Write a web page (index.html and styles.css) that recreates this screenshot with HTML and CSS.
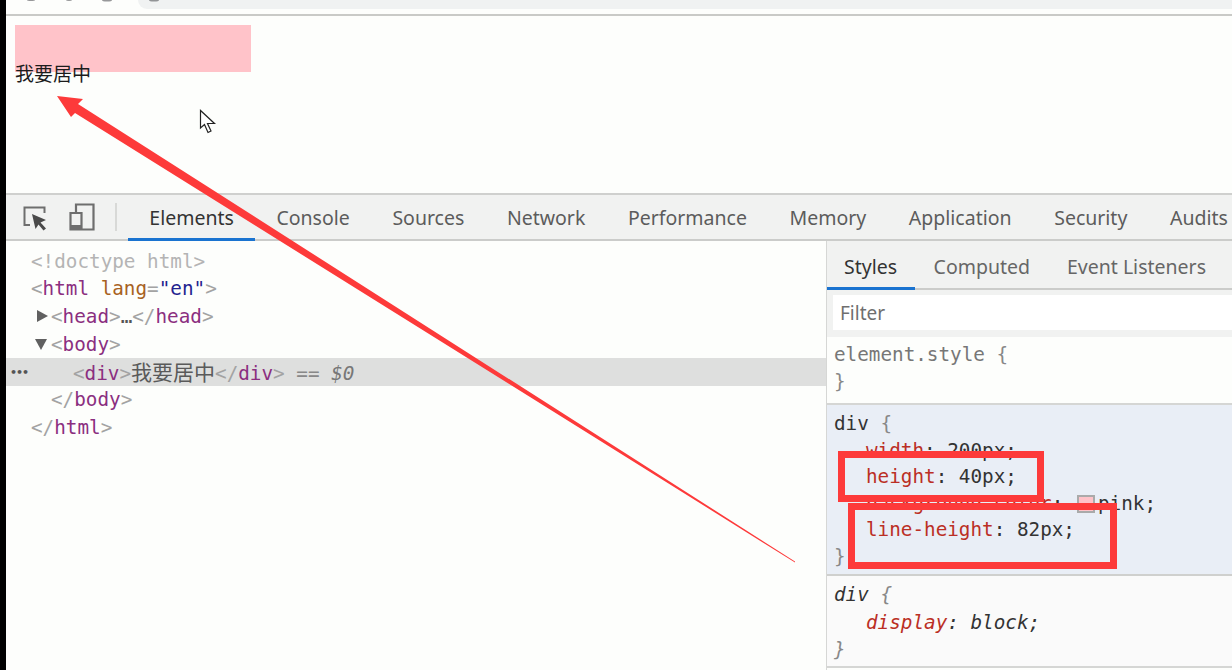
FILE: index.html
```html
<!DOCTYPE html>
<html lang="zh">
<head>
<meta charset="utf-8">
<title>我要居中</title>
<link rel="stylesheet" href="styles.css">
</head>
<body>
<div class="screen">
  <header class="browserbar"><div class="address"></div></header>
  <main class="page">
    <div class="demo">我要居中</div>
  </main>
  <section class="devtools">
    <nav class="tabs">
      <div class="tool-icons">
        <svg class="icon-inspect" width="26" height="28" viewBox="0 0 26 28"><path d="M8 21H2.500V3.500H22.500V9" fill="none" stroke="#6e6e6e" stroke-width="2"/><path d="M10 10L24 16L18.500 18.500L24 24.500L21.500 26.500L16.500 20.500L13.500 25Z" fill="#4a4a4a"/></svg>
        <svg class="icon-device" width="28" height="30" viewBox="0 0 28 30"><path d="M8 10V2.500H25.500V27.500H2.500V11H13.500V27" fill="none" stroke="#6e6e6e" stroke-width="2.200"/><rect x="3" y="23" width="10" height="4" fill="#6e6e6e"/></svg>
        <span class="divider"></span>
      </div>
      <span class="tab active">Elements</span>
      <span class="tab">Console</span>
      <span class="tab">Sources</span>
      <span class="tab">Network</span>
      <span class="tab">Performance</span>
      <span class="tab">Memory</span>
      <span class="tab">Application</span>
      <span class="tab">Security</span>
      <span class="tab">Audits</span>
    </nav>
    <div class="panes">
      <div class="dom mono">
        <div class="line l0 dim">&lt;!doctype html&gt;</div>
        <div class="line l0"><b>&lt;</b><i>html</i> <u>lang</u><b>=</b><s>"en"</s><b>&gt;</b></div>
        <div class="line l1"><span class="tri right"></span><b>&lt;</b><i>head</i><b>&gt;</b><em>…</em><b>&lt;/</b><i>head</i><b>&gt;</b></div>
        <div class="line l1"><span class="tri down"></span><b>&lt;</b><i>body</i><b>&gt;</b></div>
        <div class="line l2 selected"><span class="dots">•••</span><b>&lt;</b><i>div</i><b>&gt;</b><span class="cjk">我要居中</span><b>&lt;/</b><i>div</i><b>&gt;</b> <span class="eq">== <em class="var">$0</em></span></div>
        <div class="line l1"><b>&lt;/</b><i>body</i><b>&gt;</b></div>
        <div class="line l0"><b>&lt;/</b><i>html</i><b>&gt;</b></div>
      </div>
      <aside class="styles">
        <div class="subtabs">
          <span class="subtab active">Styles</span>
          <span class="subtab">Computed</span>
          <span class="subtab">Event Listeners</span>
        </div>
        <div class="filter"><div class="filter-input">Filter</div></div>
        <div class="rule mono plain">
          <div class="grey">element.style <span class="brace">{</span></div>
          <div class="brace">}</div>
        </div>
        <div class="rule mono matched">
          <div>div <span class="brace">{</span></div>
          <div class="decl"><span class="prop">width</span>: 200px;</div>
          <div class="decl"><span class="prop">height</span>: 40px;</div>
          <div class="decl"><span class="prop">background-color</span>: <span class="swatch"></span>pink;</div>
          <div class="decl"><span class="prop">line-height</span>: 82px;</div>
          <div class="brace">}</div>
        </div>
        <div class="rule mono agent">
          <div>div <span class="brace">{</span></div>
          <div class="decl"><span class="prop">display</span>: block;</div>
          <div class="brace">}</div>
        </div>
      </aside>
    </div>
  </section>
  <svg class="overlay" width="1232" height="670" viewBox="0 0 1232 670">
    <g fill="#55565a" opacity=".6">
      <ellipse cx="31" cy="0" rx="4" ry="1"/><ellipse cx="69" cy="0" rx="3" ry="1"/><ellipse cx="107" cy="0" rx="5" ry="1.500"/><ellipse cx="154" cy="0" rx="5" ry="1.500"/>
    </g>
    <path class="cursor" d="M200.500 110.500V128L204.500 124.500L208 132.500L211 131L207.500 123.500L214.500 123.500Z"/>
    <polygon class="red" points="57,96 83,99 78,104 795,561.500 795,562.500 75,113 71,117"/>
    <rect class="box" x="841.500" y="454.500" width="199" height="44"/>
    <rect class="box" x="851.500" y="506.500" width="262" height="59"/>
  </svg>
</div>
</body>
</html>
```
FILE: styles.css
```css
* { box-sizing: border-box; }
html, body { margin: 0; padding: 0; overflow: hidden; }
.screen {
  position: relative;
  width: 1232px;
  height: 670px;
  border-left: 6px solid #000;
  background: #fdfefc;
  display: flex;
  flex-direction: column;
  font-family: "Noto Sans", "Noto Sans CJK SC", sans-serif;
  overflow: hidden;
}
.browserbar {
  height: 16px;
  flex: none;
  background: #fdfefc;
  border-bottom: 2px solid #c9cac7;
  padding: 0 0 5px 132px;
}
.address {
  height: 9px;
  background: #f0f2f2;
  border-radius: 0 0 0 9px;
}
.page {
  height: 177px;
  flex: none;
  padding: 9px 0 0 9px;
}
.demo {
  width: 236px;
  height: 47px;
  background: #ffc3c9;
  color: #1c1c1c;
  font: 19px/96px "Noto Sans CJK SC", sans-serif;
}
.devtools {
  flex: 1;
  display: flex;
  flex-direction: column;
  min-height: 0;
}
.tabs {
  height: 48px;
  flex: none;
  display: flex;
  align-items: stretch;
  background: #f1f2f1;
  border-top: 2px solid #cfd0ce;
  border-bottom: 2px solid #cbccca;
  color: #5c5c5c;
  font-size: 19.500px;
}
.tool-icons {
  width: 122px;
  flex: none;
  display: flex;
  align-items: center;
  padding-left: 16px;
}
.icon-inspect { margin-top: 2px; }
.icon-device { margin-left: 20px; }
.divider {
  width: 2px;
  height: 28px;
  margin-left: 19px;
  background: #d8d9d7;
}
.tab {
  flex: none;
  padding: 0 21.300px;
  line-height: 46px;
  white-space: nowrap;
}
.tab.active {
  color: #333;
  margin-bottom: -2px;
  box-shadow: inset 0 -3px 0 #1a73d0;
  position: relative;
}
.panes {
  flex: 1;
  display: flex;
  min-height: 0;
}
.mono {
  font-family: "DejaVu Sans Mono", "Noto Sans CJK SC", monospace;
  font-size: 19.300px;
}
.dom {
  width: 820px;
  flex: none;
  padding-top: 6.500px;
  color: #a8a8a8;
}
.line {
  height: 27.700px;
  line-height: 27.700px;
  position: relative;
  white-space: pre;
}
.line b { font-weight: normal; color: #a3a3a3; }
.line i { font-style: normal; color: #8b2f80; }
.line u { text-decoration: none; color: #a8621f; }
.line s { text-decoration: none; color: #23238f; }
.line em { font-style: normal; color: #555; }
.l0 { padding-left: 25px; }
.l1 { padding-left: 45px; }
.l2 { padding-left: 67px; }
.dim { color: #b4b4b4; }
.selected { background: #dedfde; }
.tri {
  position: absolute;
  width: 0;
  height: 0;
  border-style: solid;
  border-color: transparent;
}
.tri.right {
  left: 31px;
  top: 7px;
  border-width: 6px 0 6px 11px;
  border-left-color: #606060;
}
.tri.down {
  left: 29px;
  top: 8px;
  border-width: 11px 6px 0;
  border-top-color: #606060;
}
.dots {
  position: absolute;
  left: 4px;
  top: 0;
  font: bold 11px/29px "DejaVu Sans", sans-serif;
  letter-spacing: -1px;
  color: #555;
}
.cjk { color: #5a5a5a; font-size: 21px; font-family: "Noto Sans CJK SC", sans-serif; }
.eq { color: #888; }
.line .var { font-style: italic; color: #777; }
.styles {
  flex: 1;
  min-width: 0;
  display: flex;
  flex-direction: column;
  border-left: 1px solid #d6d7d5;
  background: #fdfefc;
}
.subtabs {
  height: 49px;
  flex: none;
  display: flex;
  background: #f1f2f1;
  border-bottom: 2px solid #cbccca;
  font-size: 19.500px;
  color: #666;
}
.subtab {
  flex: none;
  padding: 0 18.500px;
  line-height: 51px;
  white-space: nowrap;
}
.subtab.active {
  color: #333;
  padding: 0 18px 0 17px;
  margin-bottom: -2px;
  box-shadow: inset 0 -3px 0 #1a73d0;
  position: relative;
}
.filter {
  height: 47px;
  flex: none;
  background: #f1f2f1;
  padding: 5px 0 7px 6px;
}
.filter-input {
  height: 35px;
  background: #fff;
  color: #6f6f6f;
  font-size: 19px;
  line-height: 36px;
  padding-left: 7px;
}
.rule {
  flex: none;
  padding: 5px 0 0 7px;
  line-height: 26.600px;
  color: #333;
}
.plain { height: 68px; border-bottom: 2px solid #d5d6d4; }
.matched { height: 171px; background: #e9eef6; border-bottom: 2px solid #cfd0ce; padding-top: 6px; }
.agent { height: 92px; background: #fafafa; border-bottom: 2px solid #d5d6d4; font-style: italic; line-height: 27.500px; }
.grey { color: #777; }
.brace { color: #888; }
.decl { padding-left: 32px; }
.prop { color: #bb2f25; }
.swatch {
  display: inline-block;
  width: 18px;
  height: 18px;
  margin-right: 3px;
  margin-left: 2px;
  vertical-align: -3px;
  background: #ffc3c9;
  border: 2px solid #aaa;
}
.overlay {
  position: absolute;
  left: -6px;
  top: 0;
  pointer-events: none;
}
.red { fill: #fd3a3a; }
.box { fill: none; stroke: #fd3a3a; stroke-width: 7px; }
.cursor { fill: #fff; stroke: #222; stroke-width: 1.200px; }
```
